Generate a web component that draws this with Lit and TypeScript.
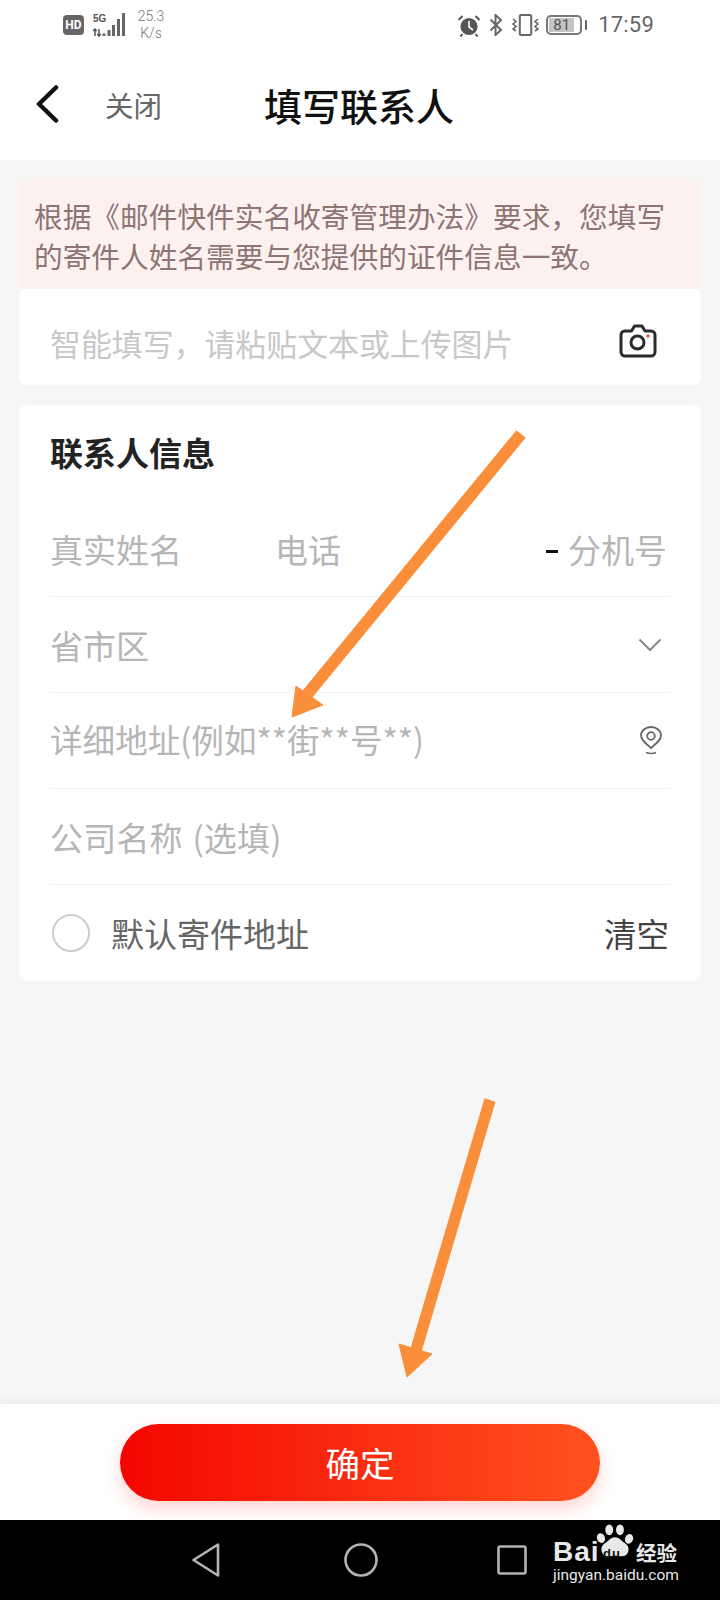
import { LitElement, html, css, svg } from "lit";
import { customElement } from "lit/decorators.js";

@customElement("app-root")
export class AppRoot extends LitElement {
  static styles = css`
    :host {
      display: flex;
      flex-direction: column;
      position: relative;
      width: 720px;
      height: 1600px;
      overflow: hidden;
      background: #f6f6f6;
      font-family: "Noto Sans CJK SC", "Noto Sans", sans-serif;
      color: #222;
    }
    svg { display: block; flex: none; }
    .status {
      height: 50px;
      background: #fff;
      display: flex;
      align-items: center;
      padding: 0 66px 0 63px;
      font-family: Roboto, sans-serif;
      color: #666;
    }
    .hd {
      width: 21px;
      height: 20px;
      border-radius: 4px;
      background: #666;
      color: #fff;
      font: 700 12px/20px Roboto, sans-serif;
      text-align: center;
      margin-right: 8px;
    }
    .net { width: 35px; margin-right: 9px; position: relative; height: 24px; }
    .fiveg {
      position: absolute;
      left: 1px;
      top: -1px;
      font: 700 11px/12px "Liberation Sans", sans-serif;
      color: #555;
      transform: scaleX(0.9);
      transform-origin: left;
    }
    .speed {
      width: 30px;
      font: 300 14px/17px Roboto, sans-serif;
      color: #777;
      text-align: center;
    }
    .spacer { flex: 1; }
    .icons { display: flex; align-items: center; }
    .bt { margin: 0 8px 0 8px; }
    .vib { margin-right: 6px; }
    .battery {
      width: 36px;
      height: 20px;
      box-sizing: border-box;
      border: 2px solid #777;
      border-radius: 5px;
      padding: 1px;
      display: flex;
    }
    .battery span {
      width: 25px;
      background: #c4c4c4;
      border-radius: 1px;
      font: 400 15px/14px Roboto, sans-serif;
      color: #555;
      text-align: center;
    }
    .tip { width: 2px; height: 10px; background: #666; margin: 0 11px 0 3px; border-radius: 1px; }
    .time { font: 400 22px/28px Roboto, sans-serif; color: #666; letter-spacing: 0.2px; }

    .header {
      height: 110px;
      background: #fff;
      display: flex;
      align-items: center;
      padding-left: 36px;
    }
    .back { margin-top: -3px; }
    .close { font-size: 28.5px; color: #666; margin-left: 46px; line-height: 40px; width: 56px; white-space: nowrap; }
    .title { font-size: 38px; font-weight: 500; color: #111; margin-left: 103px; line-height: 50px; white-space: nowrap; }

    .main {
      flex: 1;
      padding: 18px 19px 0;
      display: flex;
      flex-direction: column;
    }
    .notice {
      height: 111px;
      box-sizing: border-box;
      background: #fbf2f0;
      color: #8f7474;
      font-size: 28.7px;
      line-height: 40px;
      padding: 18px 15px 0;
    }
    .card { background: #fff; border-radius: 8px; }
    .smart {
      height: 96px;
      display: flex;
      align-items: center;
      justify-content: space-between;
      padding: 6px 44px 0 31px;
      box-sizing: border-box;
      font-size: 30.9px;
      color: #c8c8c8;
      white-space: nowrap;
    }
    .smart span { padding-top: 4px; }
    .contact { margin-top: 20px; height: 576px; padding: 0 30px; box-sizing: border-box; }
    .heading { height: 96px; font-size: 33px; font-weight: 700; color: #222; line-height: 94px; padding-left: 1px; box-sizing: border-box; }
    .row {
      height: 95px;
      margin-bottom: 1px;
      box-shadow: 0 1px 0 #f4f4f4;
      display: flex;
      align-items: center;
      font-size: 33px;
      color: #b6b6b6;
      padding-left: 1px;
      white-space: nowrap;
    }
    .row:last-child { box-shadow: none; }
    .name { width: 225px; }
    .dash { width: 12px; height: 3px; background: #111; margin: 6px 10px 0 auto; }
    .ext { margin-right: 4px; }
    .end { margin-left: auto; margin-right: 9px; }
    .pin { margin-right: 8px; }
    .detail { font-size: 32.6px; padding-bottom: 5px; }
    .company { word-spacing: 2px; letter-spacing: 0.2px; }
    .radio {
      width: 38px;
      height: 38px;
      box-sizing: border-box;
      border: 2px solid #ccc;
      border-radius: 50%;
      margin: 0 21px 0 2px;
    }
    .def { color: #666; }
    .clear { color: #444; margin-left: auto; margin-right: 2px; font-size: 32.5px; }

    .footer {
      height: 116px;
      background: #fff;
      box-shadow: 0 -2px 10px rgba(0, 0, 0, 0.06);
      display: flex;
      justify-content: center;
      padding-top: 20px;
      box-sizing: border-box;
      position: relative;
    }
    .btn {
      width: 480px;
      height: 77px;
      border-radius: 39px;
      background: linear-gradient(90deg, #f40600, #ff5220);
      box-shadow: 0 8px 18px rgba(255, 60, 30, 0.22);
      color: #fff;
      font-size: 34.5px;
      line-height: 77px;
      text-align: center;
    }
    .nav {
      height: 80px;
      background: #000;
      display: flex;
      align-items: center;
      padding-left: 191px;
      position: relative;
    }
    .circle { margin-left: 123px; }
    .square { margin-left: 119px; }
    .logo {
      position: absolute;
      left: 553px;
      top: 1px;
      width: 130px;
      height: 76px;
      color: #e8e8e8;
    }
    .bai { position: absolute; left: 0; top: 14px; font: 700 28px/34px "Liberation Sans", sans-serif; letter-spacing: 1px; }
    .paw { position: absolute; left: 43px; top: 2px; }
    .du { position: absolute; left: 50px; top: 26px; font: 700 13px/13px "Liberation Sans", sans-serif; color: #111; letter-spacing: 1px; }
    .cn { position: absolute; left: 83px; top: 18px; font-size: 20.5px; line-height: 26px; font-weight: 700; white-space: nowrap; }
    .url { position: absolute; left: 0; top: 43px; font: 400 15.5px/22px Roboto, sans-serif; white-space: nowrap; }
    .overlay { position: absolute; left: 0; top: 0; pointer-events: none; }
  `;

  private statusBar() {
    return html`<div class="status">
      <div class="hd">HD</div>
      <div class="net">
        <span class="fiveg">5G</span>
        <svg width="35" height="24" viewBox="0 0 35 24">
          <path d="M3 23v-7M1.2 18l1.8-2 1.8 2M7 16v7M5.2 21l1.8 2 1.8-2" fill="none" stroke="#555" stroke-width="1.5"/>
          <path d="M10.5 20.5h3v2.500h-3zM15.5 17h3v6h-3zM20 12h3v11h-3zM25 6h3v17h-3zM30 0h3v23h-3z" fill="#666"/>
        </svg>
      </div>
      <div class="speed">25.3<br />K/s</div>
      <div class="spacer"></div>
      <div class="icons">
        <svg width="24" height="23" viewBox="0 0 24 23">
          <circle cx="12" cy="12.5" r="8.6" fill="#555"/>
          <path d="M12 7v6l4 3" fill="none" stroke="#fff" stroke-width="1.6"/>
          <path d="M1.5 6 5.5 2M22.5 6l-4-4M5.5 20l-2 2.5M18.5 20l2 2.5" stroke="#555" stroke-width="2" fill="none"/>
        </svg>
        <svg class="bt" width="14" height="22" viewBox="0 0 14 22">
          <path d="M1.5 5.5 12 16l-5.5 5V1L12 6 1.5 16.5" fill="none" stroke="#666" stroke-width="2"/>
        </svg>
        <svg class="vib" width="29" height="22" viewBox="0 0 29 22">
          <rect x="8.8" y="1" width="11.4" height="20" rx="1.5" fill="none" stroke="#666" stroke-width="2"/>
          <path d="M2 5l3 2.5L2 10l3 2.5L2 15l3 2" fill="none" stroke="#666" stroke-width="1.6"/>
          <path d="M27 5l-3 2.5 3 2.5-3 2.5 3 2.5-3 2" fill="none" stroke="#666" stroke-width="1.6"/>
        </svg>
        <div class="battery"><span>81</span></div>
        <div class="tip"></div>
        <div class="time">17:59</div>
      </div>
    </div>`;
  }

  private arrows() {
    return svg`<svg class="overlay" width="720" height="1600" viewBox="0 0 720 1600">
      <g fill="#fb8e3a" stroke="#fb8e3a" stroke-linejoin="round">
        <path d="M521 434 305 697" stroke-width="12" fill="none"/>
        <path d="M292 717l4-31 27 19z" stroke-width="1"/>
        <path d="M490 1100 416 1350" stroke-width="11.5" fill="none"/>
        <path d="M407 1377l-8-33 33 10z" stroke-width="1"/>
      </g>
    </svg>`;
  }

  render() {
    return html`
      ${this.statusBar()}
      <div class="header">
        <svg class="back" width="23" height="38" viewBox="0 0 23 38"><path d="M20 2.5 3 19l17 16.5" fill="none" stroke="#111" stroke-width="4.5" stroke-linecap="round" stroke-linejoin="round"/></svg>
        <div class="close">关闭</div>
        <div class="title">填写联系人</div>
      </div>
      <div class="main">
        <div class="notice">根据《邮件快件实名收寄管理办法》要求，您填写的寄件人姓名需要与您提供的证件信息一致。</div>
        <div class="card smart">
          <span>智能填写，请粘贴文本或上传图片</span>
          <svg width="38" height="35" viewBox="0 0 38 35">
            <path d="M6 8h6.5l3-5h7.5l3 5H32a4 4 0 0 1 4 4v17a4 4 0 0 1-4 4H6a4 4 0 0 1-4-4V12a4 4 0 0 1 4-4z" fill="none" stroke="#2b2b2b" stroke-width="3" stroke-linejoin="round"/>
            <circle cx="18.5" cy="19.5" r="6.5" fill="none" stroke="#2b2b2b" stroke-width="3"/>
            <circle cx="29" cy="13" r="1.8" fill="#e8584f"/>
          </svg>
        </div>
        <div class="card contact">
          <div class="heading">联系人信息</div>
          <div class="row"><span class="name">真实姓名</span><span>电话</span><span class="dash"></span><span class="ext">分机号</span></div>
          <div class="row"><span>省市区</span>
            <svg class="end" width="24" height="14" viewBox="0 0 24 14"><path d="M1.5 1.5 12 12 22.5 1.5" fill="none" stroke="#8a8a8a" stroke-width="2"/></svg>
          </div>
          <div class="row"><span class="detail">详细地址(例如**街**号**)</span>
            <svg class="end pin" width="24" height="29" viewBox="0 0 24 29">
              <path d="M12 22C6 17 2 13.5 2 9.5a10 8.5 0 0 1 20 0C22 13.5 18 17 12 22z" fill="none" stroke="#666" stroke-width="1.8"/>
              <circle cx="12" cy="10" r="3.8" fill="none" stroke="#666" stroke-width="1.8"/>
              <path d="M7 26.5q5 2 10 0" fill="none" stroke="#666" stroke-width="1.6"/>
            </svg>
          </div>
          <div class="row"><span class="company">公司名称 (选填)</span></div>
          <div class="row"><div class="radio"></div><span class="def">默认寄件地址</span><span class="clear">清空</span></div>
        </div>
      </div>
      <div class="footer"><div class="btn">确定</div></div>
      <div class="nav">
        <svg width="30" height="36" viewBox="0 0 30 36"><path d="M27 2.5v31L2.5 18z" fill="none" stroke="#b4b4b4" stroke-width="2.6" stroke-linejoin="round"/></svg>
        <svg class="circle" width="34" height="34" viewBox="0 0 34 34"><circle cx="17" cy="17" r="15.5" fill="none" stroke="#b4b4b4" stroke-width="2.6"/></svg>
        <svg class="square" width="30" height="30" viewBox="0 0 30 30"><rect x="1.5" y="1.5" width="27" height="27" rx="2" fill="none" stroke="#b4b4b4" stroke-width="2.6"/></svg>
        <div class="logo">
          <span class="bai">Bai</span>
          <svg class="paw" width="38" height="40" viewBox="0 0 46 46" fill="#e8e8e8">
            <ellipse cx="16" cy="7" rx="4.8" ry="6.5"/>
            <ellipse cx="29" cy="7" rx="4.8" ry="6.5"/>
            <ellipse cx="6" cy="17" rx="4.8" ry="6" transform="rotate(-20 6 17)"/>
            <ellipse cx="40" cy="18" rx="4.8" ry="6" transform="rotate(20 40 18)"/>
            <path d="M23 16c6 0 8 5 13 8 6 4 4 16-5 15-3 0-5-1-8-1s-5 1-8 1c-9 1-11-11-5-15 5-3 7-8 13-8z"/>
          </svg>
          <span class="du">du</span>
          <span class="cn">经验</span>
          <span class="url">jingyan.baidu.com</span>
        </div>
      </div>
      ${this.arrows()}
    `;
  }
}
